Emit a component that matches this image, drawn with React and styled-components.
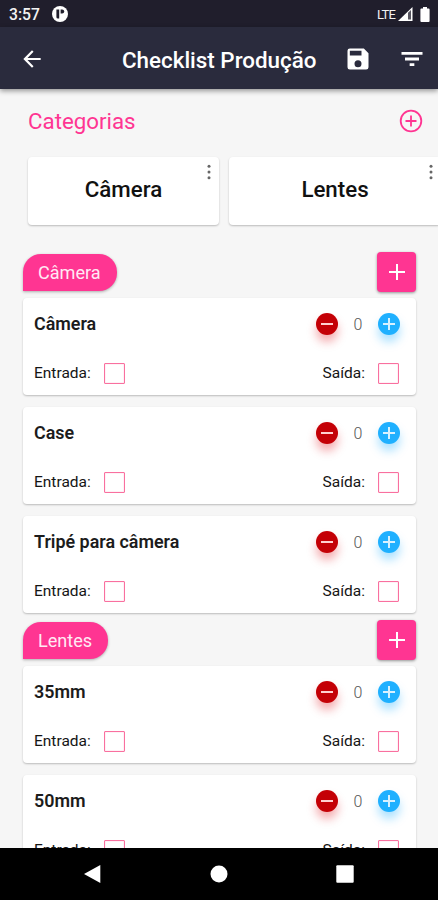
import React from "react";
import styled, { createGlobalStyle } from "styled-components";

const PINK = "#ff3592";

const categories = [
	{ name: "Câmera", width: 191 },
	{ name: "Lentes", width: 212 },
];

const sections = [
	{ name: "Câmera", pill: 94, items: ["Câmera", "Case", "Tripé para câmera"] },
	{ name: "Lentes", pill: 85, items: ["35mm", "50mm"] },
];

export default function App() {
	return (
		<>
			<GlobalStyle />
			<Screen>
				<StatusBar />
				<AppBar>
					<BackIcon width="26" height="26" viewBox="0 0 24 24" fill="#fff">
						<path d="M20 11H7.83l5.59-5.59L12 4l-8 8 8 8 1.41-1.41L7.83 13H20v-2z" />
					</BackIcon>
					<Title>Checklist Produção</Title>
					<svg width="28" height="28" viewBox="0 0 24 24" fill="#fff">
						<path d="M17 3H5a2 2 0 0 0-2 2v14a2 2 0 0 0 2 2h14a2 2 0 0 0 2-2V7l-4-4zm-5 16a3 3 0 1 1 0-6 3 3 0 0 1 0 6zm3-10H5V5h10v4z" />
					</svg>
					<FilterIcon width="28" height="28" viewBox="0 0 24 24" fill="#fff">
						<path d="M10 18h4v-2.400h-4v2.400zM3 6v2.300h18V6H3zm3 7.200h12v-2.400H6v2.400z" />
					</FilterIcon>
				</AppBar>
				<Content>
					<CategoryHeader>
						<CategoryTitle>Categorias</CategoryTitle>
						<svg width="24" height="24" viewBox="0 0 24 24" fill="none" stroke={PINK} strokeWidth="1.8">
							<circle cx="12" cy="12" r="10.3" />
							<path d="M12 6.5v11M6.5 12h11" />
						</svg>
					</CategoryHeader>
					<CategoryList>
						{categories.map((category) => (
							<CategoryCard key={category.name} $width={category.width}>
								{category.name}
								<MoreIcon width="4" height="16" viewBox="0 0 4 16" fill="#666">
									<circle cx="2" cy="2.2" r="1.5" />
									<circle cx="2" cy="8" r="1.5" />
									<circle cx="2" cy="13.8" r="1.5" />
								</MoreIcon>
							</CategoryCard>
						))}
					</CategoryList>
					{sections.map((section) => (
						<Section key={section.name}>
							<SectionHeader>
								<Pill $width={section.pill}>{section.name}</Pill>
								<AddButton>
									<svg width="16" height="16" viewBox="0 0 16 16" stroke="#fff" strokeWidth="2">
										<path d="M8 0v16M0 8h16" />
									</svg>
								</AddButton>
							</SectionHeader>
							<Items>
								{section.items.map((item) => (
									<ItemCard key={item} name={item} />
								))}
							</Items>
						</Section>
					))}
				</Content>
				<NavBar>
					<svg width="18" height="20" viewBox="0 0 18 20" fill="#fff">
						<path d="M17.3 1v18L1 10z" />
					</svg>
					<svg width="18" height="18" viewBox="0 0 18 18" fill="#fff">
						<circle cx="9" cy="9" r="8.5" />
					</svg>
					<svg width="18" height="18" viewBox="0 0 18 18" fill="#fff">
						<rect x="0.3" y="0.3" width="17.4" height="17.4" rx="1" />
					</svg>
				</NavBar>
			</Screen>
		</>
	);
}

function StatusBar() {
	return (
		<StatusRow>
			<Clock>3:57</Clock>
			<svg width="16" height="16" viewBox="0 0 16 16">
				<circle cx="8" cy="8" r="8" fill="#fff" />
				<path d="M4.400 3.500h2.800v9H6a1.600 1.600 0 0 1-1.600-1.600z" fill="#201e2c" />
				<path d="M8.600 3.500h1.600a2 2 0 0 1 0 4H8.600z" fill="#201e2c" />
			</svg>
			<Network>LTE</Network>
			<svg width="15" height="14" viewBox="0 0 15 14">
				<path d="M14.5 0v14H0z" fill="#fff" />
				<path d="M10 5.8l3-2.8v9.5h-3z" fill="#201e2c" fillOpacity="0.75" />
			</svg>
			<BatteryIcon width="10" height="15" viewBox="0 0 10 15" fill="#fff">
				<path d="M3 0h4v1.5h1.6a1 1 0 0 1 1 1V14a1 1 0 0 1-1 1H1.4a1 1 0 0 1-1-1V2.5a1 1 0 0 1 1-1H3z" />
			</BatteryIcon>
		</StatusRow>
	);
}

function ItemCard({ name }) {
	return (
		<Card>
			<ItemRow>
				<ItemName>{name}</ItemName>
				<RoundButton $color="#c40006" $glow="rgba(225, 30, 40, 0.36)">
					<svg width="12" height="12" viewBox="0 0 12 12" stroke="#ffd0d0" strokeWidth="2">
						<path d="M0 6h12" />
					</svg>
				</RoundButton>
				<Count>0</Count>
				<RoundButton $color="#1fb0ff" $glow="rgba(31, 176, 255, 0.36)">
					<svg width="12" height="12" viewBox="0 0 12 12" stroke="#d8f1ff" strokeWidth="2">
						<path d="M0 6h12M6 0v12" />
					</svg>
				</RoundButton>
			</ItemRow>
			<CheckRow>
				<Check>
					Entrada:
					<Box />
				</Check>
				<Check>
					Saída:
					<Box />
				</Check>
			</CheckRow>
		</Card>
	);
}

const GlobalStyle = createGlobalStyle`
	* {
		box-sizing: border-box;
	}

	body {
		margin: 0;
		font-family: Roboto, "Liberation Sans", sans-serif;
	}

	svg {
		display: block;
		flex-shrink: 0;
	}
`;

const Screen = styled.div`
	width: 438px;
	height: 900px;
	display: flex;
	flex-direction: column;
	overflow: hidden;
	background: #f6f6f6;
`;

const StatusRow = styled.div`
	flex: 0 0 27px;
	display: flex;
	align-items: center;
	padding: 1px 8px 0 9px;
	background: #201e2c;
	color: #f2f2f2;
`;

const Clock = styled.span`
	width: 43px;
	font-size: 15.7px;
	font-weight: 500;
`;

const Network = styled.span`
	margin: 0 3px 0 auto;
	font-size: 13px;
	letter-spacing: -0.8px;
`;

const BatteryIcon = styled.svg`
	margin-left: 7px;
`;

const AppBar = styled.header`
	position: relative;
	flex: 0 0 62px;
	display: flex;
	align-items: center;
	padding: 1px 12px 0 19px;
	background: #2a2b3d;
	box-shadow: 0 2px 5px rgba(0, 0, 0, 0.4);
`;

const BackIcon = styled.svg`
	margin-right: 77px;
`;

const Title = styled.h1`
	flex: 1;
	margin: 0;
	padding-top: 2px;
	color: #fff;
	font-size: 22.4px;
	font-weight: 500;
	line-height: 30px;
	white-space: nowrap;
`;

const FilterIcon = styled.svg`
	margin-left: 26px;
`;

const Content = styled.main`
	flex: 1;
	min-height: 0;
	overflow: hidden;
`;

const CategoryHeader = styled.div`
	height: 68px;
	display: flex;
	align-items: center;
	justify-content: space-between;
	padding: 0 15px 4px 28px;
`;

const CategoryTitle = styled.h2`
	margin: 0;
	color: ${PINK};
	font-size: 22.3px;
	font-weight: 400;
`;

const CategoryList = styled.div`
	display: flex;
	gap: 10px;
	padding-left: 28px;
`;

const CategoryCard = styled.div`
	position: relative;
	flex: 0 0 ${({ $width }) => $width}px;
	height: 68px;
	display: flex;
	align-items: center;
	justify-content: center;
	padding-bottom: 5px;
	border-radius: 4px;
	background: #fff;
	box-shadow: 0 1px 2px rgba(0, 0, 0, 0.24);
	color: #111;
	font-size: 22.3px;
	font-weight: 500;
`;

const MoreIcon = styled.svg`
	position: absolute;
	top: 7px;
	right: 8px;
`;

const Section = styled.section`
	padding: 0 22px 0 23px;

	${CategoryList} + & {
		margin-top: 27px;
	}

	& + & {
		margin-top: 7.5px;
	}
`;

const SectionHeader = styled.div`
	height: 46px;
	display: flex;
	align-items: flex-start;
	justify-content: space-between;
`;

const Pill = styled.div`
	width: ${({ $width }) => $width}px;
	height: 37px;
	margin-top: 2px;
	padding-left: 15px;
	border-radius: 18px 18px 18px 0;
	background: ${PINK};
	box-shadow: 0 1px 3px rgba(0, 0, 0, 0.3);
	color: #ffeaf4;
	font-size: 18.1px;
	line-height: 37px;
`;

const AddButton = styled.button`
	width: 39px;
	height: 40px;
	display: flex;
	align-items: center;
	justify-content: center;
	padding: 0;
	border: 0;
	border-radius: 4px;
	background: ${PINK};
	box-shadow: 0 1px 3px rgba(0, 0, 0, 0.4);
`;

const Items = styled.div`
	display: flex;
	flex-direction: column;
	gap: 12.5px;
`;

const Card = styled.article`
	height: 96.5px;
	padding: 15px 16px 0 11px;
	border-radius: 4px;
	background: #fff;
	box-shadow: 0 1px 2px rgba(0, 0, 0, 0.24);
`;

const ItemRow = styled.div`
	height: 22px;
	display: flex;
	align-items: center;
`;

const ItemName = styled.h3`
	flex: 1;
	margin: 0;
	padding-bottom: 1px;
	color: #1c1c1c;
	font-size: 17.9px;
	font-weight: 600;
`;

const Count = styled.span`
	width: 40px;
	color: #555;
	font-size: 16px;
	font-weight: 300;
	text-align: center;
`;

const RoundButton = styled.button`
	width: 22px;
	height: 22px;
	display: flex;
	align-items: center;
	justify-content: center;
	padding: 0;
	border: 0;
	border-radius: 50%;
	background: ${({ $color }) => $color};
	box-shadow: 0 7px 10px ${({ $glow }) => $glow};
`;

const CheckRow = styled.div`
	height: 22px;
	display: flex;
	align-items: center;
	justify-content: space-between;
	margin-top: 27px;
	padding-right: 1px;
`;

const Check = styled.label`
	display: flex;
	align-items: center;
	gap: 13px;
	color: #151515;
	font-size: 15.5px;
`;

const Box = styled.span`
	width: 21px;
	height: 21px;
	border: 1px solid #f9709f;
	border-radius: 1px;
	box-shadow: inset 0 0 1px #f9709f;
`;

const NavBar = styled.nav`
	position: relative;
	flex: 0 0 52px;
	display: flex;
	align-items: center;
	justify-content: space-between;
	padding: 0 84px 0 83px;
	background: #000;
`;
